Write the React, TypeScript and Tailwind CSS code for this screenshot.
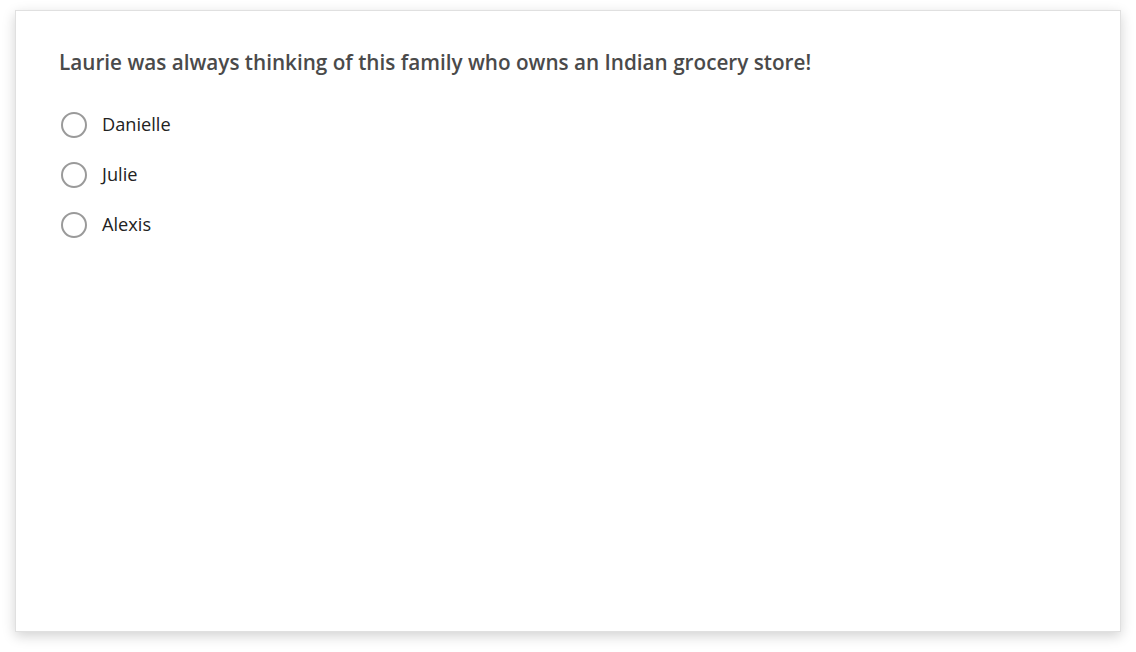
export default function App() {
  const opts = ["Danielle", "Julie", "Alexis"];
  return (
    <div className="w-[1136px] h-[652px] bg-white pt-[10px] pl-[15px]" style={{ fontFamily: '"Open Sans", sans-serif' }}>
      <div className="w-[1106px] h-[622px] bg-white border border-[#e0e0e0] shadow-[0_4px_12px_rgba(0,0,0,0.18)] pl-[43px] pt-[36px]">
        <h1 className="text-[20.7px] leading-[30px] font-semibold text-[#4a4a4a]">
          Laurie was always thinking of this family who owns an Indian grocery store!
        </h1>
        <div className="mt-[34px] pl-[2px] flex flex-col gap-[22px]">
          {opts.map((o) => (
            <label key={o} className="flex items-center gap-[15px] h-[28px]">
              <span className="w-[26px] h-[26px] rounded-full border-2 border-[#9a9a9a] bg-white" />
              <span className="text-[18.2px] text-[#222]">{o}</span>
            </label>
          ))}
        </div>
      </div>
    </div>
  );
}
